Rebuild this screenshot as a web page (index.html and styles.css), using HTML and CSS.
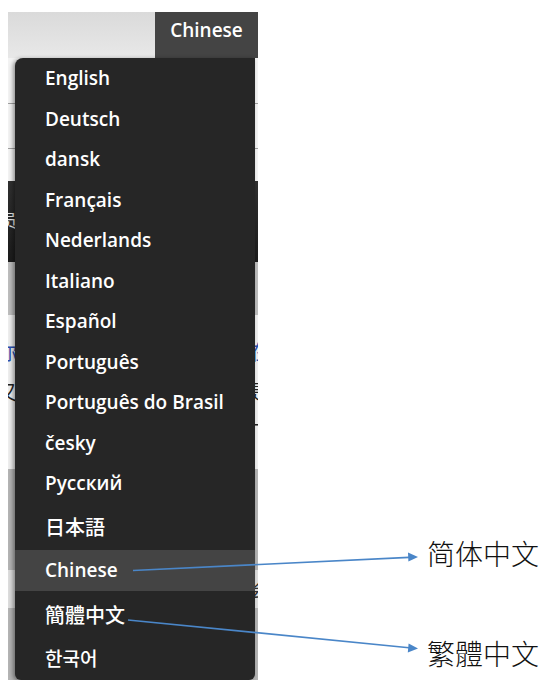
FILE: index.html
```html
<!DOCTYPE html>
<html lang="en">
<head>
<meta charset="utf-8">
<title>Language menu</title>
<link rel="stylesheet" href="styles.css">
</head>
<body>
<div class="canvas">
  <div class="shot">
    <div class="hdr">
      <div class="hdr-fill"></div>
      <div class="lang-btn">Chinese</div>
    </div>
    <div class="band light">
      <div class="row r1"></div>
      <div class="row r2"></div>
      <div class="row r3"></div>
    </div>
    <div class="band dark"><span class="frag frag-w">员</span></div>
    <div class="band mid"></div>
    <div class="band pale">
      <div class="tline blue"><span>你</span><span>在</span></div>
      <div class="tline"><span>又</span><span>是</span></div>
      <div class="tline"><span></span><span>下</span></div>
    </div>
    <div class="band grey">
      <div class="patch"><span class="frag">会</span></div>
    </div>

    <ul class="menu">
      <li class="item">English</li>
      <li class="item">Deutsch</li>
      <li class="item">dansk</li>
      <li class="item">Français</li>
      <li class="item">Nederlands</li>
      <li class="item">Italiano</li>
      <li class="item">Español</li>
      <li class="item">Português</li>
      <li class="item">Português do Brasil</li>
      <li class="item">česky</li>
      <li class="item">Русский</li>
      <li class="item cjk jp">日本語</li>
      <li class="item active">Chinese</li>
      <li class="item cjk tc">簡體中文</li>
      <li class="item cjk kr">한국어</li>
    </ul>
  </div>

  <svg class="arrows" width="560" height="692" viewBox="0 0 560 692" aria-hidden="true">
    <line x1="133" y1="570.5" x2="409" y2="557.4" stroke="#4a86c8" stroke-width="1.6"/>
    <polygon points="418,557 408,552.6 408.4,561.6" fill="#4a86c8"/>
    <line x1="128" y1="620" x2="409" y2="647.7" stroke="#4a86c8" stroke-width="1.6"/>
    <polygon points="418,648.5 408.6,643.5 407.8,652.5" fill="#4a86c8"/>
  </svg>
  <div class="note n1">简体中文</div>
  <div class="note n2">繁體中文</div>
</div>
</body>
</html>
```

FILE: styles.css
```css
html, body {
  margin: 0;
  padding: 0;
  background: #ffffff;
}

.canvas {
  position: relative;
  width: 560px;
  height: 692px;
  overflow: hidden;
  font-family: "Open Sans", "Noto Sans", sans-serif;
}

.shot {
  position: relative;
  margin: 12px 0 0 8px;
  width: 250px;
  height: 668px;
  overflow: hidden;
  display: flex;
  flex-direction: column;
}

.hdr {
  display: flex;
  height: 46px;
  flex: none;
}

.hdr-fill {
  flex: 1;
  background: linear-gradient(#dadada, #e8e8e8);
}

.lang-btn {
  width: 103px;
  background: #444444;
  color: #ffffff;
  font-size: 19px;
  font-weight: 600;
  display: flex;
  align-items: center;
  justify-content: center;
  padding-bottom: 10px;
  box-sizing: border-box;
}

.band {
  flex: none;
}

.band.light {
  height: 123px;
  display: flex;
  flex-direction: column;
  background: #f3f3f3;
}

.row {
  box-sizing: border-box;
}

.r1 { height: 46px; border-bottom: 1px solid #a0a0a0; }
.r2 { height: 45px; border-bottom: 1px solid #a0a0a0; }
.r3 { flex: 1; }

.band.dark {
  height: 81px;
  background: linear-gradient(#303030, #1c1c1c);
  display: flex;
  align-items: center;
}

.frag {
  font-family: "Noto Sans CJK SC", sans-serif;
  font-size: 17px;
  line-height: 1;
  margin-left: -9px;
  color: #333;
}

.frag-w {
  color: #e8e8e8;
  margin-left: -8px;
  margin-top: -4px;
}

.band.mid {
  height: 53px;
  background: #bdbdbd;
}

.band.pale {
  height: 154px;
  background: #eeeeee;
  padding-top: 26px;
  box-sizing: border-box;
  display: flex;
  flex-direction: column;
  gap: 18px;
}

.tline {
  display: flex;
  justify-content: space-between;
  font-family: "Noto Sans CJK SC", sans-serif;
  font-size: 20px;
  line-height: 22px;
  color: #222;
  margin: 0 -12px 0 -11px;
}

.tline.blue {
  color: #2a4fb0;
}

.band.grey {
  flex: 1;
  background: #b4b4b4;
  padding-top: 101px;
}

.patch {
  height: 38px;
  background: #dddddd;
  display: flex;
  align-items: center;
  justify-content: flex-end;
}

.patch .frag {
  margin-left: 0;
  margin-right: -9px;
}

.menu {
  position: absolute;
  left: 7px;
  top: 46px;
  width: 240px;
  margin: 0;
  padding: 0;
  list-style: none;
  background: #262626;
  border-radius: 8px 0 6px 6px;
  box-shadow: -2px 1px 4px rgba(0, 0, 0, 0.4);
  box-sizing: border-box;
  height: 622px;
}

.item {
  height: 40.5px;
  display: flex;
  align-items: center;
  padding-left: 30px;
  color: #ffffff;
  font-size: 19px;
  font-weight: 600;
  white-space: nowrap;
}

.item.cjk {
  font-family: "Noto Sans CJK JP", sans-serif;
  font-size: 20px;
  font-weight: 500;
}

.item.jp { height: 46px; }
.item.active { height: 41px; background: #444444; }
.item.tc { height: 47px; font-family: "Noto Sans CJK TC", sans-serif; }
.item.kr { height: 40px; font-family: "Noto Sans CJK KR", sans-serif; font-size: 19px; }

.arrows {
  position: absolute;
  left: 0;
  top: 0;
  pointer-events: none;
}

.note {
  position: absolute;
  left: 427px;
  font-family: "Noto Sans CJK SC", sans-serif;
  font-weight: 300;
  font-size: 28px;
  line-height: 28px;
  color: #111111;
  white-space: nowrap;
}

.n1 { top: 539px; }
.n2 { top: 639px; font-family: "Noto Sans CJK TC", sans-serif; }
```
